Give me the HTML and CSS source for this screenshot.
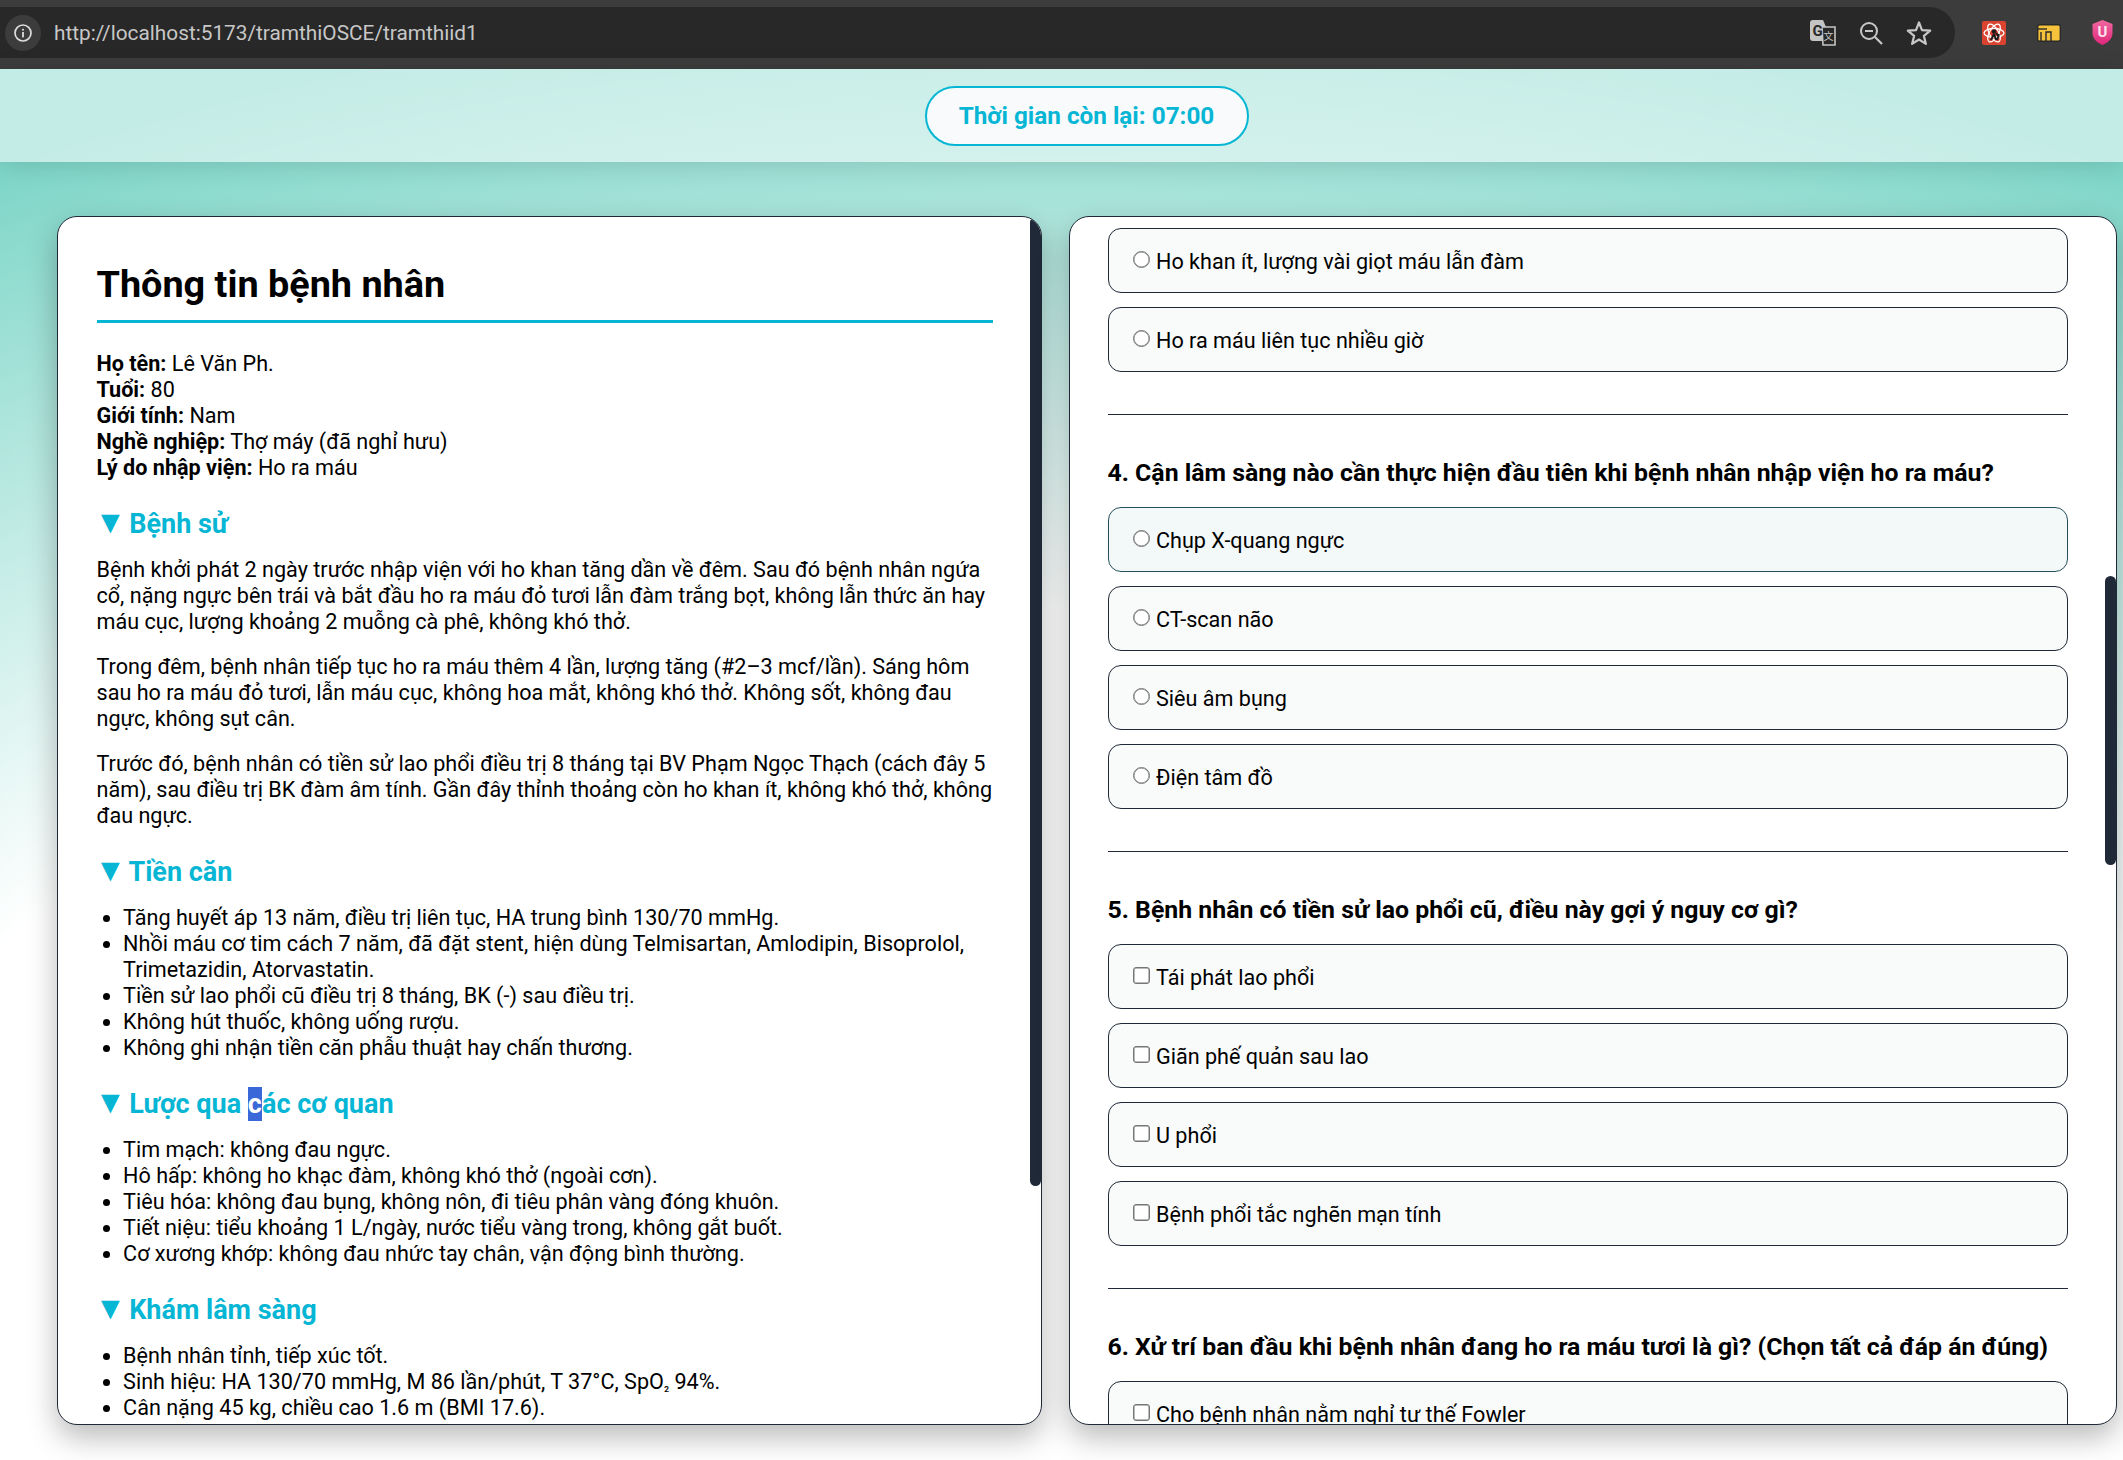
FILE: index.html
```html
<!DOCTYPE html>
<html lang="vi">
<head>
    <meta charset="UTF-8">
    <meta name="viewport" content="width=device-width, initial-scale=1.0">
    <title>Trạm thi OSCE</title>
    <link rel="stylesheet" href="styles.css">
</head>
<body>

<div class="browser-bar">
    <div class="address">
        <span class="site-info">
            <svg width="18" height="18" viewBox="0 0 18 18"><circle cx="9" cy="9" r="8" fill="none" stroke="#dcdcdc" stroke-width="1.7"/><rect x="8.1" y="8" width="1.8" height="5.4" fill="#dcdcdc"/><rect x="8.1" y="4.800" width="1.8" height="1.8" fill="#dcdcdc"/></svg>
        </span>
        <span class="url">http://localhost:5173/tramthiOSCE/tramthiid1</span>
        <span class="address-icons">
            <svg width="26" height="26" viewBox="0 0 26 26"><path d="M3 0h10l9 21H3a3 3 0 0 1-3-3V3a3 3 0 0 1 3-3z" fill="#c4c4c4"/><path d="M12 7h13v18H13z" fill="#282828" stroke="#c4c4c4" stroke-width="1.6"/><text x="2.5" y="16" class="translate-g">G</text><text x="13.5" y="19.5" class="translate-x">文</text></svg>
            <svg width="24" height="24" viewBox="0 0 24 24"><circle cx="10" cy="10" r="8" fill="none" stroke="#c7c7c7" stroke-width="2"/><path d="M6 10h8M16 16l7 7" stroke="#c7c7c7" stroke-width="2.2" fill="none"/></svg>
            <svg width="26" height="26" viewBox="0 0 26 26"><path d="M13 2.5l3 7.6 8.2.6-6.3 5.2 2 8L13 19.5l-6.900 4.400 2-8-6.300-5.200 8.200-.6z" fill="none" stroke="#c7c7c7" stroke-width="2.200" stroke-linejoin="round"/></svg>
        </span>
    </div>
    <div class="extensions">
        <svg width="24" height="24" viewBox="0 0 24 24"><rect width="24" height="24" rx="2" fill="#d9432f"/><g fill="none" stroke="#fff" stroke-width="1.300"><ellipse cx="12" cy="12" rx="10" ry="4.500"/><ellipse cx="12" cy="12" rx="10" ry="4.500" transform="rotate(60 12 12)"/><ellipse cx="12" cy="12" rx="10" ry="4.500" transform="rotate(120 12 12)"/></g><circle cx="12" cy="10.500" r="2.200" fill="#1d1d1d"/><path d="M12 13l-3 6M12 13l2 6M14 12l3 4M17 13l-2 6" stroke="#1d1d1d" stroke-width="2" fill="none"/></svg>
        <svg width="24" height="18" viewBox="0 0 24 18"><rect x=".7" y=".7" width="22.600" height="16.600" rx="2" fill="#f6c23c" stroke="#2a2a2a" stroke-width="1.400"/><path d="M1 5h9" stroke="#2a2a2a" stroke-width="1.400"/><path d="M4 17V8M9 17V8h5v9" fill="none" stroke="#2a2a2a" stroke-width="1.400"/></svg>
        <svg width="21" height="25" viewBox="0 0 21 25"><defs><linearGradient id="shield" x1="0" y1="0" x2="0" y2="1"><stop offset="0" stop-color="#f0699f"/><stop offset="1" stop-color="#e0267c"/></linearGradient></defs><path d="M10.500 0l10 4v9c0 6-4.500 9.500-10 12C5 22.500.5 19 .5 13V4z" fill="url(#shield)"/><text x="10.500" y="17" class="shield-u">U</text></svg>
    </div>
</div>

<div class="page">
    <div class="timer-band">
        <div class="timer">Thời gian còn lại: 07:00</div>
    </div>

    <div class="panels">
        <div class="panel patient">
            <h2>Thông tin bệnh nhân</h2>
            <div class="info">
                <div><b>Họ tên:</b> Lê Văn Ph.</div>
                <div><b>Tuổi:</b> 80</div>
                <div><b>Giới tính:</b> Nam</div>
                <div><b>Nghề nghiệp:</b> Thợ máy (đã nghỉ hưu)</div>
                <div><b>Lý do nhập viện:</b> Ho ra máu</div>
            </div>

            <h3><span class="arrow">▼</span> Bệnh sử</h3>
            <p>Bệnh khởi phát 2 ngày trước nhập viện với ho khan tăng dần về đêm. Sau đó bệnh nhân ngứa cổ, nặng ngực bên trái và bắt đầu ho ra máu đỏ tươi lẫn đàm trắng bọt, không lẫn thức ăn hay máu cục, lượng khoảng 2 muỗng cà phê, không khó thở.</p>
            <p>Trong đêm, bệnh nhân tiếp tục ho ra máu thêm 4 lần, lượng tăng (#2–3 mcf/lần). Sáng hôm sau ho ra máu đỏ tươi, lẫn máu cục, không hoa mắt, không khó thở. Không sốt, không đau ngực, không sụt cân.</p>
            <p>Trước đó, bệnh nhân có tiền sử lao phổi điều trị 8 tháng tại BV Phạm Ngọc Thạch (cách đây 5 năm), sau điều trị BK đàm âm tính. Gần đây thỉnh thoảng còn ho khan ít, không khó thở, không đau ngực.</p>

            <h3><span class="arrow">▼</span> Tiền căn</h3>
            <ul>
                <li>Tăng huyết áp 13 năm, điều trị liên tục, HA trung bình 130/70 mmHg.</li>
                <li>Nhồi máu cơ tim cách 7 năm, đã đặt stent, hiện dùng Telmisartan, Amlodipin, Bisoprolol, Trimetazidin, Atorvastatin.</li>
                <li>Tiền sử lao phổi cũ điều trị 8 tháng, BK (-) sau điều trị.</li>
                <li>Không hút thuốc, không uống rượu.</li>
                <li>Không ghi nhận tiền căn phẫu thuật hay chấn thương.</li>
            </ul>

            <h3><span class="arrow">▼</span> Lược qua <span class="selected">c</span>ác cơ quan</h3>
            <ul>
                <li>Tim mạch: không đau ngực.</li>
                <li>Hô hấp: không ho khạc đàm, không khó thở (ngoài cơn).</li>
                <li>Tiêu hóa: không đau bụng, không nôn, đi tiêu phân vàng đóng khuôn.</li>
                <li>Tiết niệu: tiểu khoảng 1 L/ngày, nước tiểu vàng trong, không gắt buốt.</li>
                <li>Cơ xương khớp: không đau nhức tay chân, vận động bình thường.</li>
            </ul>

            <h3><span class="arrow">▼</span> Khám lâm sàng</h3>
            <ul>
                <li>Bệnh nhân tỉnh, tiếp xúc tốt.</li>
                <li>Sinh hiệu: HA 130/70 mmHg, M 86 lần/phút, T 37°C, SpO<span class="sub">₂</span> 94%.</li>
                <li>Cân nặng 45 kg, chiều cao 1.6 m (BMI 17.6).</li>
            </ul>
            <div class="thumb thumb-left"></div>
        </div>

        <div class="panel quiz">
            <div class="question">
                <label class="option"><input type="radio" name="q3">Ho khan ít, lượng vài giọt máu lẫn đàm</label>
                <label class="option"><input type="radio" name="q3">Ho ra máu liên tục nhiều giờ</label>
            </div>
            <div class="question">
                <h4>4. Cận lâm sàng nào cần thực hiện đầu tiên khi bệnh nhân nhập viện ho ra máu?</h4>
                <label class="option hovered"><input type="radio" name="q4">Chụp X-quang ngực</label>
                <label class="option"><input type="radio" name="q4">CT-scan não</label>
                <label class="option"><input type="radio" name="q4">Siêu âm bụng</label>
                <label class="option"><input type="radio" name="q4">Điện tâm đồ</label>
            </div>
            <div class="question">
                <h4>5. Bệnh nhân có tiền sử lao phổi cũ, điều này gợi ý nguy cơ gì?</h4>
                <label class="option"><input type="checkbox">Tái phát lao phổi</label>
                <label class="option"><input type="checkbox">Giãn phế quản sau lao</label>
                <label class="option"><input type="checkbox">U phổi</label>
                <label class="option"><input type="checkbox">Bệnh phổi tắc nghẽn mạn tính</label>
            </div>
            <div class="question">
                <h4>6. Xử trí ban đầu khi bệnh nhân đang ho ra máu tươi là gì? (Chọn tất cả đáp án đúng)</h4>
                <label class="option"><input type="checkbox">Cho bệnh nhân nằm nghỉ tư thế Fowler</label>
            </div>
            <div class="thumb thumb-right"></div>
        </div>
    </div>
</div>

</body>
</html>
```
FILE: styles.css
```css
* {
    box-sizing: border-box;
}

body {
    margin: 0;
    font-family: 'Roboto', 'Liberation Sans', sans-serif;
    font-size: 21.6px;
    line-height: 26px;
    color: #000;
    background: #fff;
}

/* browser chrome */
.browser-bar {
    height: 69px;
    background-color: #3c3c3c;
    display: flex;
    align-items: center;
    padding-bottom: 4px;
}

.address {
    width: 1955px;
    height: 51px;
    background-color: #282828;
    border-radius: 0 26px 26px 0;
    display: flex;
    align-items: center;
    padding-left: 5px;
}

.site-info {
    width: 36px;
    height: 36px;
    border-radius: 50%;
    background-color: #3c3c3c;
    display: flex;
    align-items: center;
    justify-content: center;
}

.url {
    margin-left: 13px;
    font-size: 20.8px;
    color: #c7c7c7;
}

.address-icons {
    margin-left: auto;
    margin-right: 23px;
    display: flex;
    align-items: center;
    gap: 23px;
}

.extensions {
    flex: 1;
    display: flex;
    align-items: center;
    padding-left: 27px;
    gap: 31px;
}

.translate-g {
    font: bold 15px 'Roboto', sans-serif;
    fill: #282828;
}

.translate-x {
    font: 10px 'Noto Sans CJK SC', sans-serif;
    fill: #c4c4c4;
}

.shield-u {
    font: bold 15px 'Roboto', sans-serif;
    fill: #fbe3ee;
    text-anchor: middle;
}

/* page */
.page {
    height: 1391px;
    background: radial-gradient(ellipse 2286px 1465px at 50% 1391px, #fff 58%, #7cd5c7 100%);
}

.timer-band {
    height: 93px;
    background-color: rgba(255, 255, 255, 0.55);
    box-shadow: 0 3px 24px rgba(0, 0, 0, 0.12);
    display: flex;
    align-items: center;
    justify-content: center;
    padding-left: 50px;
    position: relative;
}

.timer {
    width: 324px;
    height: 60px;
    border: 2.5px solid #06b6d4;
    border-radius: 30px;
    background-color: #f9fafb;
    color: #06b6d4;
    font-size: 24.3px;
    font-weight: 700;
    display: flex;
    align-items: center;
    justify-content: center;
}

.panels {
    display: flex;
    gap: 27px;
    padding: 54px 6px 0 57px;
}

.panel {
    height: 1209px;
    background-color: #fff;
    border: 1.5px solid #1f2937;
    border-radius: 20px;
    box-shadow: 0 12px 30px rgba(0, 0, 0, 0.28);
    overflow: hidden;
    position: relative;
}

.thumb {
    position: absolute;
    right: 0;
    width: 11px;
    background-color: #1f2937;
    border-radius: 6px;
}

.thumb-left {
    top: 0;
    height: 969px;
}

.thumb-right {
    top: 359px;
    height: 289px;
}

/* patient panel */
.patient {
    width: 985px;
    padding: 44px 48px 0 38.5px;
}

h2 {
    margin: 0 0 28px;
    font-size: 37.8px;
    line-height: 47px;
    font-weight: 700;
    padding-bottom: 12px;
    border-bottom: 3.5px solid #06b6d4;
}

h3 {
    margin: 27px 0 17px;
    font-size: 27px;
    line-height: 32px;
    font-weight: 700;
    color: #06b6d4;
}

.arrow {
    font-size: 32px;
    line-height: 0;
    margin: 0 -3.7px 0 -2px;
}

.selected {
    background-color: #3a68d8;
    color: #fff;
    padding: 1px 0;
}

p {
    margin: 0 0 19px;
}

ul {
    margin: 0;
    padding-left: 26.6px;
}

.sub {
    font-size: 14px;
    line-height: 0;
}

/* quiz panel */
.quiz {
    width: 1048px;
    padding: 11px 48.5px 0 37.5px;
}

.question {
    padding-bottom: 28px;
    margin-bottom: 44px;
    border-bottom: 1px solid #1f2937;
}

h4 {
    margin: 0 0 20px;
    font-size: 24.84px;
    line-height: 28px;
    font-weight: 700;
    white-space: nowrap;
}

.option {
    height: 65px;
    margin-bottom: 14px;
    padding-left: 24px;
    padding-top: 2px;
    background-color: #f9fafa;
    border: 1.5px solid #1f2937;
    border-radius: 13px;
    display: flex;
    align-items: center;
}

.option.hovered {
    background-color: #f3f8f9;
    border-color: #27505f;
}

.option input {
    appearance: none;
    width: 17.5px;
    height: 17.5px;
    margin: 0 6px 4px 0;
    background-color: #fff;
    border: 1px solid #767676;
    box-shadow: inset 0 0 0 0.5px #767676;
}

.option input[type="radio"] {
    border-radius: 50%;
}

.option input[type="checkbox"] {
    border-radius: 3px;
}
```
